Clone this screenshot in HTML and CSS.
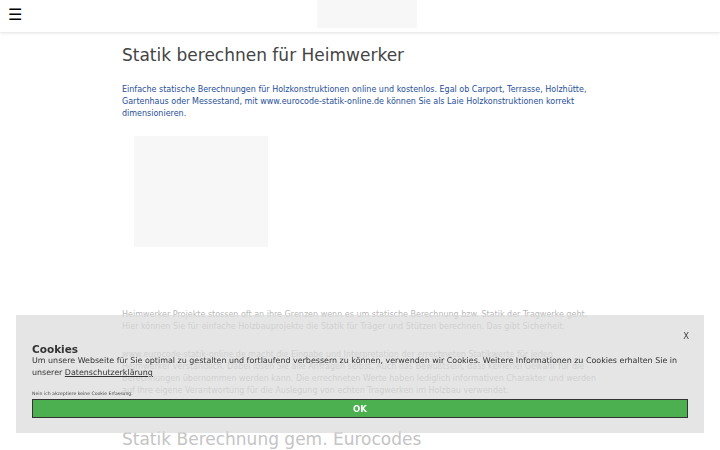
FILE: index.html
```html
<!DOCTYPE html>
<html lang="de">
  <head>
    <meta charset="utf-8">
    <title>Statik berechnen für Heimwerker</title>
    <link rel="stylesheet" href="styles.css">
  </head>
  <body>
    <header id="topbar">
      <button id="menu-toggle">☰</button>
      <div class="logo"></div>
    </header>

    <main id="content">
      <h1>Statik berechnen für Heimwerker</h1>
      <p class="intro">
        Einfache statische Berechnungen für Holzkonstruktionen online und kostenlos. Egal ob Carport, Terrasse, Holzhütte,
        Gartenhaus oder Messestand, mit www.eurocode-statik-online.de können Sie als Laie Holzkonstruktionen korrekt
        dimensionieren.
      </p>
      <div class="picture"></div>

      <div class="fade">
        <p>
          Heimwerker Projekte stossen oft an ihre Grenzen wenn es um statische Berechnung bzw. Statik der Tragwerke geht.
          Hier können Sie für einfache Holzbauprojekte die Statik für Träger und Stützen berechnen. Das gibt Sicherheit.
        </p>
        <p>
          www.eurocode-statik-online.de macht die Eingabe und Interpretation der errechneten Statikwerte für jeden
          Heimwerker verständlich. Dabei lösen Sie alle Anfragen selbst. Auch das Bewußtsein, dass keinerlei Gewähr für die
          Berechnungen übernommen werden kann. Die errechneten Werte haben lediglich informativen Charakter und werden
          auf Ihre eigene Verantwortung für die Auslegung von echten Tragwerken im Holzbau verwendet.
        </p>
        <h2>Statik Berechnung gem. Eurocodes</h2>
      </div>
    </main>

    <div id="cookie-box">
      <button class="close">X</button>
      <div class="cookie-title">Cookies</div>
      <div class="cookie-text">
        Um unsere Webseite für Sie optimal zu gestalten und fortlaufend verbessern zu können, verwenden wir Cookies. Weitere Informationen zu Cookies erhalten Sie in
        unserer <a href="#">Datenschutzerklärung</a>
      </div>
      <div class="decline">Nein ich akzeptiere keine Cookie Erfassung.</div>
      <button class="accept">OK</button>
    </div>
  </body>
</html>
```

FILE: styles.css
```css
body {
  margin: 0;
  padding: 0;
  font-family: "DejaVu Sans", sans-serif;
  background-color: #fff;
}

#topbar {
  height: 32px;
  background-color: #fff;
  box-shadow: 0 1px 3px rgba(0, 0, 0, 0.12);
  display: flex;
  align-items: flex-start;
  position: relative;
}

#menu-toggle {
  background: none;
  border: none;
  padding: 0;
  margin: 5px 0 0 8px;
  font-family: "DejaVu Sans", sans-serif;
  font-size: 16px;
  line-height: 20px;
  color: #000;
  cursor: pointer;
}

#topbar .logo {
  width: 100px;
  height: 28px;
  margin-left: 295px;
  background-color: #f7f7f7;
}

#content {
  width: 476px;
  margin: 0 auto;
  padding-top: 11px;
}

h1 {
  font-weight: normal;
  font-size: 17px;
  color: #444;
  margin: 0;
  line-height: 24px;
}

#content p {
  font-size: 8px;
  line-height: 12px;
  margin: 0 0 16px;
}

#content .intro {
  color: #1f4f9a;
  margin-top: 17px;
}

.picture {
  width: 134px;
  height: 111px;
  margin: 16px 0 0 12px;
  background-color: #f7f7f7;
}

.fade {
  margin-top: 62px;
  color: #b8b8b8;
}

h2 {
  font-weight: normal;
  font-size: 17px;
  color: #c4c4c4;
  margin: 30px 0 0;
  line-height: 24px;
}

#cookie-box {
  position: fixed;
  left: 16px;
  right: 16px;
  bottom: 17px;
  height: 118px;
  padding: 14px 16px 16px;
  box-sizing: border-box;
  background-color: rgba(218, 218, 218, 0.7);
  color: #333;
}

#cookie-box .close {
  display: block;
  margin-left: auto;
  margin-right: -1px;
  background: none;
  border: none;
  padding: 0;
  font-family: "DejaVu Sans", sans-serif;
  font-size: 8.5px;
  line-height: 14px;
  color: #444;
  cursor: pointer;
}

.cookie-title {
  font-weight: bold;
  font-size: 10.5px;
  line-height: 12px;
}

.cookie-text {
  font-size: 7.95px;
  line-height: 12px;
}

.cookie-text a {
  color: #333;
  text-decoration: underline;
}

.decline {
  font-size: 4.6px;
  line-height: 8px;
  margin-top: 11px;
  color: #444;
}

.accept {
  display: block;
  width: 100%;
  height: 19px;
  margin-top: 1px;
  background-color: #4caf50;
  border: 1px solid #333;
  color: #fff;
  font-family: "DejaVu Sans", sans-serif;
  font-weight: bold;
  font-size: 8.5px;
  cursor: pointer;
}
```
